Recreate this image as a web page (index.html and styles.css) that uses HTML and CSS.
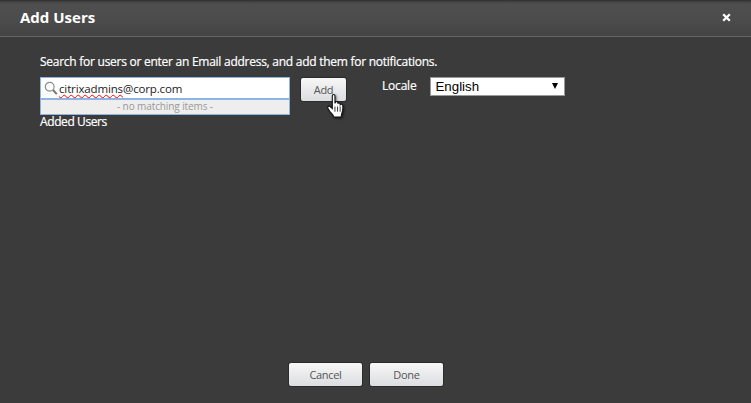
FILE: index.html
```html
<!DOCTYPE html>
<html lang="en">
<head>
<meta charset="utf-8">
<title>Add Users</title>
<link rel="stylesheet" href="styles.css">
</head>
<body>
<div class="dialog">
  <header class="header">
    <h1 class="title">Add Users</h1>
    <svg class="close" width="9" height="9" viewBox="0 0 9 9" aria-hidden="true"><path d="M1.2 1.2 7.8 7.8M7.8 1.2 1.2 7.8" stroke="#fff" stroke-width="2.3" fill="none"/></svg>
  </header>
  <main class="content">
    <p class="intro">Search for users or enter an Email address, and add them for notifications.</p>
    <div class="row">
      <div class="search">
        <div class="search-box">
          <svg class="lens" width="14" height="15" viewBox="0 0 14 15" aria-hidden="true"><circle cx="5.7" cy="5.7" r="4.4" fill="none" stroke="#8a8a8a" stroke-width="1.2"/><path d="M9 9l3.8 4.2" stroke="#777" stroke-width="2" fill="none"/></svg>
          <span class="typed"><span class="misspelt">citrixadmins</span>@corp.com</span>
        </div>
        <div class="no-match">- no matching items -</div>
      </div>
      <div class="add-wrap">
        <button class="btn add">Add</button>
        <svg class="cursor" width="19" height="25" viewBox="0 0 18 24" aria-hidden="true"><path d="M5 1.500C5 .2 7.500.2 7.500 1.500V9L8 8C8.400 7 10 7 10.200 8.200V9.200C10.600 8.300 12.300 8.400 12.500 9.500V10.300C13 9.500 14.800 9.700 15 11 15.300 13.500 15 16 14.300 18 13.800 19.500 13.500 20.500 13.500 22H6.500C6 20 4 18.500 2.500 16.500L.8 13.800C0 12.400 1.500 11 2.800 12L5 14Z" fill="#fff" stroke="#111" stroke-width="1"/><path d="M7.500 12v5M10 12v5M12.500 12v5" stroke="#111" stroke-width=".8" fill="none"/></svg>
      </div>
      <label class="locale-label" for="locale">Locale</label>
      <div class="locale-wrap">
        <select class="locale" id="locale"><option>English</option></select>
      </div>
    </div>
    <div class="added">Added Users</div>
    <div class="actions">
      <button class="btn action">Cancel</button>
      <button class="btn action">Done</button>
    </div>
  </main>
</div>
</body>
</html>
```
FILE: styles.css
```css
* { box-sizing: border-box; }
html, body { margin: 0; height: 100%; }
body { background: #3b3b3b; font-family: "Open Sans", "Noto Sans", sans-serif; overflow: hidden; }
.dialog { display: flex; flex-direction: column; height: 403px; background: #3b3b3b; }
.header {
  display: flex; align-items: center; justify-content: space-between;
  height: 37px; padding: 0 20px 3px 20px;
  background: linear-gradient(#3e3e3e 0, #4f4f4f 3px, #4b4b4b 60%, #444 100%);
  border-top: 1px solid #333; border-bottom: 1px solid #656565;
}
.title { margin: 0; font-size: 15px; font-weight: 700; color: #fff; }
.close { display: block; }
.content { flex: 1; display: flex; flex-direction: column; padding: 16px 0 17px 40px; }
.intro { margin: 0; font-size: 12px; line-height: 17px; letter-spacing: -.26px; color: #fff; -webkit-text-stroke: .2px #fff; }
.row { display: flex; align-items: flex-start; margin-top: 7px; height: 22px; }
.search { position: relative; width: 250px; }
.search-box {
  display: flex; align-items: center; gap: 1px; height: 22px; padding-left: 3px;
  background: #fff; border: 1px solid #8db4e2; font-size: 11.500px; letter-spacing: -.14px; color: #222;
}
.lens { display: block; flex: none; }
.misspelt { text-decoration: underline wavy #f00 1px; text-underline-offset: 1px; }
.no-match {
  position: absolute; top: 22px; left: 0; right: 0; height: 16px;
  background: #eee; border: 1px solid #8db4e2;
  font-size: 10px; line-height: 13px; letter-spacing: -.1px; color: #999; text-align: center;
}
.add-wrap { position: relative; margin: 1px 0 0 11px; }
.btn {
  display: block; padding: 0; border: 0; border-radius: 2px;
  background: linear-gradient(#f7f7f7, #dcdde0); box-shadow: 0 0 0 1px #2b2b2b;
  font-family: inherit; font-size: 11px; letter-spacing: -.3px; color: #555;
}
.add { width: 45px; height: 23px; }
.cursor { position: absolute; left: 26px; top: 16px; filter: drop-shadow(1px 1px 1px rgba(0,0,0,.6)); }
.locale-label { margin-left: 36px; font-size: 12px; line-height: 17px; letter-spacing: -.2px; color: #fff; -webkit-text-stroke: .2px #fff; }
.locale-wrap { position: relative; width: 135px; height: 19px; margin-left: 14px; }
.locale-wrap::after {
  content: ""; position: absolute; right: 7px; top: 6px;
  border-left: 3.500px solid transparent; border-right: 3.500px solid transparent; border-top: 6px solid #000;
}
.locale {
  appearance: none; display: block; width: 100%; height: 100%; padding: 0 0 0 4px;
  background: #fff; border: 1px solid #999; border-radius: 0;
  font-family: "Liberation Sans", Arial, sans-serif; font-size: 13.300px; color: #000;
}
.added { margin-top: 14px; font-size: 12px; line-height: 17px; letter-spacing: -.4px; color: #fff; -webkit-text-stroke: .2px #fff; }
.actions { display: flex; justify-content: center; gap: 8px; margin-top: auto; margin-left: -40px; padding-right: 19px; }
.action { width: 73px; height: 23px; }
```
